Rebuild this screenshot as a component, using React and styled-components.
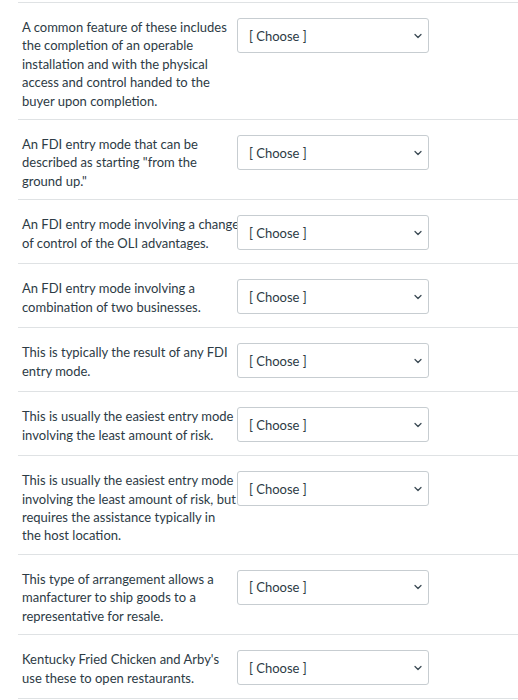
import React from "react";
import styled, { createGlobalStyle } from "styled-components";
import { ChevronDown } from "lucide-react";

const GlobalStyle = createGlobalStyle`
  body {
    margin: 0;
    background: #fff;
    font-family: Lato, "Open Sans", sans-serif;
    color: #2d3b45;
  }
`;

const List = styled.div`
  margin-top: 2px;
  padding-left: 18px;
`;

const Row = styled.div`
  display: flex;
  align-items: flex-start;
  border-top: 1px solid #dfe2e4;
  padding: 15px 0 9px 4px;

  &:last-child {
    border-bottom: 1px solid #dfe2e4;
  }
`;

const Prompt = styled.div`
  width: 218px;
  flex: none;
  font-size: 13px;
  line-height: 18.4px;
  color: #2d3b45;
`;

const SelectBox = styled.div`
  width: 192px;
  height: 35px;
  box-sizing: border-box;
  margin: 0 0 4px -3px;
  border: 1px solid #c7cdd1;
  border-radius: 3px;
  display: flex;
  align-items: center;
  justify-content: space-between;
  padding: 0 4px 0 11px;
  font-size: 13px;
  color: #2d3b45;
  background: #fff;
`;

const questions = [
  "A common feature of these includes the completion of an operable installation and with the physical access and control handed to the buyer upon completion.",
  'An FDI entry mode that can be described as starting "from the ground up."',
  "An FDI entry mode involving a change of control of the OLI advantages.",
  "An FDI entry mode involving a combination of two businesses.",
  "This is typically the result of any FDI entry mode.",
  "This is usually the easiest entry mode involving the least amount of risk.",
  "This is usually the easiest entry mode involving the least amount of risk, but requires the assistance typically in the\u00a0host location.",
  "This type of arrangement allows a manfacturer to ship goods to a representative for resale.",
  "Kentucky Fried Chicken and Arby's use these to open restaurants.",
];

export default function App() {
  return (
    <>
      <GlobalStyle />
      <List>
        {questions.map((q, i) => (
          <Row key={i}>
            <Prompt>{q}</Prompt>
            <SelectBox>
              <span>[ Choose ]</span>
              <ChevronDown size={12} strokeWidth={2.5} color="#3b4a54" />
            </SelectBox>
          </Row>
        ))}
      </List>
    </>
  );
}
